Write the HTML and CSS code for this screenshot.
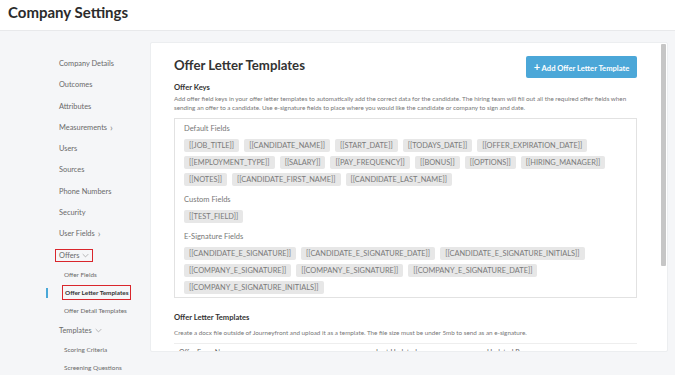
FILE: index.html
```html
<!DOCTYPE html>
<html>
<head>
<meta charset="utf-8">
<link rel="stylesheet" href="styles.css">
</head>
<body>
<header class="topbar"><h1>Company Settings</h1></header>
<div class="layout">
  <nav class="sidebar">
    <a class="nav-item">Company Details</a>
    <a class="nav-item">Outcomes</a>
    <a class="nav-item">Attributes</a>
    <a class="nav-item">Measurements <span class="chev">&#x203A;</span></a>
    <a class="nav-item">Users</a>
    <a class="nav-item">Sources</a>
    <a class="nav-item">Phone Numbers</a>
    <a class="nav-item">Security</a>
    <a class="nav-item">User Fields <span class="chev">&#x203A;</span></a>
    <a class="nav-item"><span class="boxed">Offers <svg class="down" viewBox="0 0 10 6" width="7" height="5"><path d="M1 1l4 4 4-4" fill="none" stroke="#999" stroke-width="1"/></svg></span></a>
    <a class="sub-item">Offer Fields</a>
    <a class="sub-item active"><span class="marker"></span><span class="boxed sub-boxed">Offer Letter Templates</span></a>
    <a class="sub-item">Offer Detail Templates</a>
    <a class="nav-item">Templates <svg class="down" viewBox="0 0 10 6" width="7" height="5"><path d="M1 1l4 4 4-4" fill="none" stroke="#999" stroke-width="1"/></svg></a>
    <a class="sub-item">Scoring Criteria</a>
    <a class="sub-item">Screening Questions</a>
  </nav>
  <main class="card">
    <div class="scroll-thumb"></div>
    <div class="card-inner">
      <div class="title-row">
        <h2>Offer Letter Templates</h2>
        <button class="btn"><span class="plus">+</span> Add Offer Letter Template</button>
      </div>
      <h3>Offer Keys</h3>
      <p class="desc">Add offer field keys in your offer letter templates to automatically add the correct data for the candidate. The hiring team will fill out all the required offer fields when sending an offer to a candidate. Use e-signature fields to place where you would like the candidate or company to sign and date.</p>
      <div class="keys">
        <div class="group-label">Default Fields</div>
        <div class="tags">
          <span class="tag">[[JOB_TITLE]]</span>
          <span class="tag">[[CANDIDATE_NAME]]</span>
          <span class="tag">[[START_DATE]]</span>
          <span class="tag">[[TODAYS_DATE]]</span>
          <span class="tag">[[OFFER_EXPIRATION_DATE]]</span>
          <span class="tag">[[EMPLOYMENT_TYPE]]</span>
          <span class="tag">[[SALARY]]</span>
          <span class="tag">[[PAY_FREQUENCY]]</span>
          <span class="tag">[[BONUS]]</span>
          <span class="tag">[[OPTIONS]]</span>
          <span class="tag">[[HIRING_MANAGER]]</span>
          <span class="tag">[[NOTES]]</span>
          <span class="tag">[[CANDIDATE_FIRST_NAME]]</span>
          <span class="tag">[[CANDIDATE_LAST_NAME]]</span>
        </div>
        <div class="group-label">Custom Fields</div>
        <div class="tags">
          <span class="tag">[[TEST_FIELD]]</span>
        </div>
        <div class="group-label">E-Signature Fields</div>
        <div class="tags">
          <span class="tag">[[CANDIDATE_E_SIGNATURE]]</span>
          <span class="tag">[[CANDIDATE_E_SIGNATURE_DATE]]</span>
          <span class="tag">[[CANDIDATE_E_SIGNATURE_INITIALS]]</span>
          <span class="tag">[[COMPANY_E_SIGNATURE]]</span>
          <span class="tag">[[COMPANY_E_SIGNATURE]]</span>
          <span class="tag">[[COMPANY_E_SIGNATURE_DATE]]</span>
          <span class="tag">[[COMPANY_E_SIGNATURE_INITIALS]]</span>
        </div>
      </div>
      <h3 class="sec2">Offer Letter Templates</h3>
      <p class="desc">Create a docx file outside of Journeyfront and upload it as a template. The file size must be under 5mb to send as an e-signature.</p>
      <table class="tbl">
        <thead>
          <tr><th class="c1">Offer Form Name</th><th class="c2">Last Updated</th><th class="c3">Updated By</th></tr>
        </thead>
      </table>
    </div>
  </main>
</div>
</body>
</html>
```
FILE: styles.css
```css
* { box-sizing: border-box; }
html, body { margin: 0; padding: 0; }
body {
  width: 675px;
  height: 375px;
  overflow: hidden;
  background: #f5f6f8;
  font-family: Lato, "Open Sans", sans-serif;
  color: #333;
}
.topbar {
  height: 31px;
  background: #fff;
  border-bottom: 1px solid #e8e9eb;
  padding: 0 8px;
}
.topbar h1 {
  margin: 0;
  font-size: 15px;
  font-weight: 700;
  line-height: 24px;
  color: #2b2b2b;
}
.layout {
  display: flex;
  align-items: flex-start;
  padding-top: 11px;
}
.sidebar {
  width: 150px;
  flex: none;
  display: flex;
  flex-direction: column;
  padding: 11px 0 0 59px;
}
.nav-item {
  font-size: 7.4px;
  color: #6a6a6a;
  height: 21.3px;
  line-height: 21.3px;
  display: flex;
  align-items: center;
  gap: 3px;
  white-space: nowrap;
}
.chev { font-size: 10px; color: #888; line-height: 1; position: relative; top: -1px; }
.down { display: inline-block; }
.boxed {
  display: inline-flex;
  align-items: center;
  gap: 3px;
  border: 1.5px solid #d9262c;
  padding: 1px 3px 1px 3px;
  margin-left: -4px;
  line-height: 9px;
}
.sub-item {
  font-size: 6.4px;
  color: #6a6a6a;
  height: 18px;
  line-height: 18px;
  padding-left: 5px;
  display: flex;
  align-items: center;
  white-space: nowrap;
  position: relative;
}
.sub-item.active { color: #333; font-weight: 700; }
.sub-boxed { margin-left: -2px; padding: 2px 2px; }
.marker {
  position: absolute;
  left: -13px;
  top: 4px;
  width: 2px;
  height: 10px;
  background: #4aa8d8;
}
.card {
  position: relative;
  width: 518px;
  height: 310px;
  flex: none;
  background: #fff;
  border: 1px solid #eceef0;
  border-radius: 2px;
  overflow: hidden;
}
.scroll-thumb {
  position: absolute;
  right: 1px;
  top: 1px;
  width: 5px;
  height: 222px;
  background: #c6c6c6;
  border-radius: 1px;
}
.card-inner { padding: 13px 30px 20px 23px; }
.title-row {
  display: flex;
  justify-content: space-between;
  align-items: flex-start;
  height: 22px;
}
.title-row h2 { margin: 0; font-size: 13.2px; font-weight: 700; color: #333; line-height: 18px; }
.btn {
  border: 0;
  background: #4ba7d8;
  color: #fff;
  font-family: Lato, sans-serif;
  font-weight: 700;
  font-size: 7.6px;
  height: 22px;
  width: 111px;
  border-radius: 2px;
  padding: 0;
}
.plus { font-size: 11px; line-height: 1; }
h3 {
  margin: 3px 0 0;
  font-size: 7.6px;
  font-weight: 700;
  color: #333;
  line-height: 12px;
}
.desc {
  margin: 1px 0 0;
  font-size: 6.3px;
  line-height: 9px;
  color: #777;
}
.keys {
  margin-top: 6px;
  border: 1px solid #e2e2e2;
  padding: 4px 8px 3px 9px;
}
.group-label {
  font-size: 7.5px;
  color: #777;
  line-height: 12px;
  margin-bottom: 4px;
}
.tags {
  display: flex;
  flex-wrap: wrap;
  gap: 4px 5px;
  margin-bottom: 8px;
}
.tags:last-child { margin-bottom: 0; }
.tag {
  background: #e7e7e7;
  color: #7a7a7a;
  font-size: 7.4px;
  height: 13px;
  line-height: 13px;
  padding: 0 5px;
  border-radius: 2px;
}
.sec2 { margin-top: 13px; }
.sec2 + .desc { margin-top: 5px; }
.tbl {
  margin-top: 6px;
  width: 100%;
  border-collapse: collapse;
  font-size: 7px;
  color: #666;
}
.tbl th {
  text-align: left;
  font-weight: 400;
  border-top: 1px solid #eee;
  height: 17px;
  padding: 0 5px;
}
.tbl th.c1 { width: 197px; }
.tbl th.c2 { width: 111px; }
```
